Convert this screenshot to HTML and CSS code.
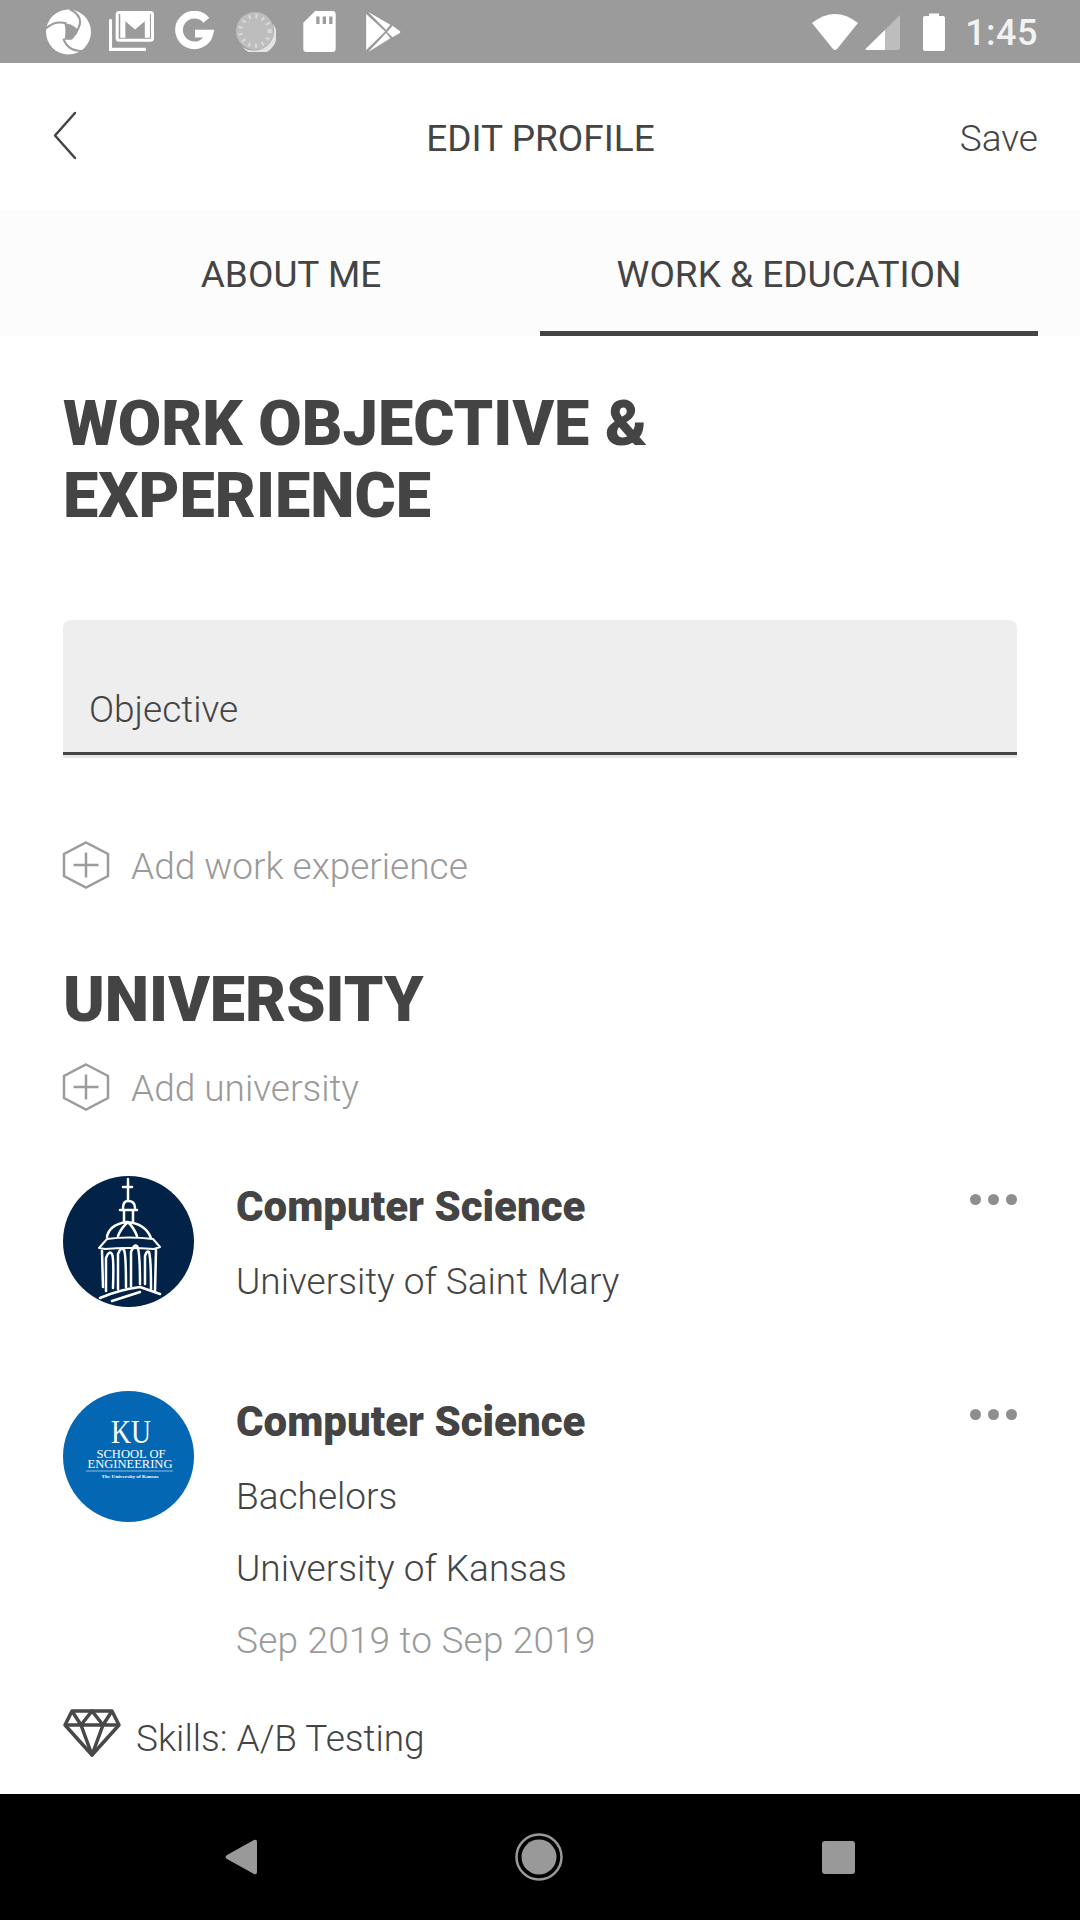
FILE: index.html
```html
<!DOCTYPE html>
<html lang="en">
<head>
<meta charset="utf-8">
<title>Edit profile</title>
<link rel="stylesheet" href="styles.css">
</head>
<body>
<div class="phone">
  <div class="status">
    <div class="status-left">
      <svg class="ic" width="45" height="46" viewBox="0 0 44 45"><circle cx="22" cy="22.500" r="22" fill="#fff"/><g fill="none" stroke="#9b9b9b" stroke-width="2"><path d="M23 0Q37 7 32 18Q30 24 25 29"/><path d="M0 19Q8 11 20 14"/><path d="M17 29Q21 41 35 41"/></g><path d="M18 14Q25 14 31 20Q29 26 25 30L18 30Q20 22 18 14Z" fill="#9b9b9b"/></svg>
      <svg class="ic" width="45" height="41" viewBox="0 0 44 40"><path d="M1.500 8V37.500H36" fill="none" stroke="#fff" stroke-width="3"/><rect x="8" y="1.500" width="34.500" height="27" rx="2" fill="none" stroke="#fff" stroke-width="3"/><path d="M11 3H40V26H35V10L25.500 18L16 10V26H11Z" fill="#fff"/></svg>
      <svg class="ic" width="40" height="41" viewBox="0 0 38 40"><path d="M31 9A15 15 0 1 0 34 22H20" fill="none" stroke="#fff" stroke-width="7.500"/></svg>
      <svg class="ic" width="40" height="40" viewBox="0 0 38 38"><circle cx="18" cy="18" r="18" fill="#bdbdbd"/><path d="M35 11A18 18 0 0 1 6 33A19 19 0 0 0 35 11Z" fill="#e4e4e4"/><circle cx="18" cy="18" r="14" fill="none" stroke="#d8d8d8" stroke-width="4" stroke-dasharray="2 4.600"/></svg>
      <svg class="ic" width="33" height="41" viewBox="0 0 30 38"><path d="M11 0H27A3 3 0 0 1 30 3V35A3 3 0 0 1 27 38H3A3 3 0 0 1 0 35V11Z" fill="#fff"/><path d="M12 5H15V12H12ZM18 5H21V12H18ZM24 5H27V12H24Z" fill="#9b9b9b"/></svg>
      <svg class="ic" width="36" height="40" viewBox="0 0 34 38"><path d="M1 2L19 18.500L1 36Z" fill="#fff"/><path d="M3 0L24 12L20 17Z" fill="#fff"/><path d="M3 38L24 25L20 20Z" fill="#fff"/><path d="M26 13L33 18Q34 19 33 20L26 24L21 19Z" fill="#fff"/></svg>
    </div>
    <div class="status-right">
      <svg class="ic" width="46" height="38" viewBox="0 0 46 38"><path d="M0 10Q23 -8 46 10L25 36Q23 38 21 36Z" fill="#fff"/></svg>
      <svg class="ic sig" width="36" height="36" viewBox="0 0 36 36"><path d="M35 0V33Q35 35 33 35H1Q0 35 1 33.500Z" fill="#bdbdbd"/><path d="M20 15V35H1Q0 35 1 33.500Z" fill="#fff"/></svg>
      <svg class="ic bat" width="22" height="38" viewBox="0 0 22 38"><path d="M6 3V0.500H16V3H20Q22 3 22 5V36Q22 38 20 38H2Q0 38 0 36V5Q0 3 2 3Z" fill="#fff"/></svg>
      <span class="clock">1:45</span>
    </div>
  </div>

  <header class="topbar">
    <svg class="back" width="24" height="50" viewBox="0 0 24 50"><path d="M22 2L2 24.500L22 47" fill="none" stroke="#444" stroke-width="2.500" stroke-linecap="round" stroke-linejoin="round"/></svg>
    <div class="title">EDIT PROFILE</div>
    <div class="save">Save</div>
  </header>

  <nav class="tabs">
    <div class="tab">ABOUT ME</div>
    <div class="tab tab-on">WORK &amp; EDUCATION</div>
  </nav>

  <main class="content">
    <h1 class="heading heading-first">WORK OBJECTIVE &amp;<br>EXPERIENCE</h1>

    <div class="field"><span>Objective</span></div>

    <div class="add add-work">
      <svg width="48" height="48" viewBox="0 0 48 48"><path d="M24 1.500L46 13V35L24 46.500L2 35V13Z" fill="none" stroke="#9c9c9c" stroke-width="2.500"/><path d="M11.500 24H36.500M24 11.500V36.500" fill="none" stroke="#9c9c9c" stroke-width="2.500"/></svg>
      <span>Add work experience</span>
    </div>

    <h1 class="heading heading-uni">UNIVERSITY</h1>

    <div class="add add-uni">
      <svg width="48" height="48" viewBox="0 0 48 48"><path d="M24 1.500L46 13V35L24 46.500L2 35V13Z" fill="none" stroke="#9c9c9c" stroke-width="2.500"/><path d="M11.500 24H36.500M24 11.500V36.500" fill="none" stroke="#9c9c9c" stroke-width="2.500"/></svg>
      <span>Add university</span>
    </div>

    <section class="edu edu-first">
      <svg class="logo" width="131" height="131" viewBox="0 0 131 131">
        <circle cx="65.500" cy="65.500" r="65.500" fill="#022247"/>
        <g fill="none" stroke="#fff" stroke-linecap="round" stroke-linejoin="round">
          <path d="M65 3V24M60 11H69" stroke-width="2.500"/>
          <path d="M60 32Q60 25 65 25Q72 25 72 32M57 34H74M61 35V46M70 35V46" stroke-width="2.500"/>
          <path d="M44 61Q46 49 63 46Q82 47 88 62M55 60Q58 52 65 46Q71 52 74 60" stroke-width="2.500"/>
          <path d="M36 72L44 63Q65 60 90 63L97 71L91 73Q65 71 42 73Z" stroke-width="2"/>
          <path d="M39 75L40 111M93 74L92 116" stroke-width="2.500"/>
          <path d="M43 115V82Q46 74 49 78Q51 82 50 112M55 113V78Q58 70 61 74Q63 78 63 111M68 110V76Q71 68 74 70Q77 74 77 108M82 108V80Q84 74 86 76Q88 82 88 113" stroke-width="2.500"/>
          <path d="M37 122Q55 114 77 111L97 118M49 125L77 116" stroke-width="2.500"/>
        </g>
      </svg>
      <div class="edu-body">
        <div class="edu-title">Computer Science</div>
        <div class="edu-line edu-line-first">University of Saint Mary</div>
      </div>
      <div class="dots"><i></i><i></i><i></i></div>
    </section>

    <section class="edu edu-second">
      <svg class="logo" width="131" height="131" viewBox="0 0 131 131">
        <circle cx="65.500" cy="65.500" r="65.500" fill="#0467b3"/>
        <text class="ku" x="68" y="52" text-anchor="middle" textLength="40" lengthAdjust="spacingAndGlyphs">KU</text>
        <text class="ku-school" x="68" y="67" text-anchor="middle" textLength="69" lengthAdjust="spacingAndGlyphs">SCHOOL OF</text>
        <text class="ku-school" x="67" y="77" text-anchor="middle" textLength="85" lengthAdjust="spacingAndGlyphs">ENGINEERING</text>
        <path d="M23 80H110" stroke="#cfe0f0" stroke-width="0.700"/>
        <text class="ku-small" x="67" y="87" text-anchor="middle" textLength="57" lengthAdjust="spacingAndGlyphs">The University of Kansas</text>
      </svg>
      <div class="edu-body">
        <div class="edu-title">Computer Science</div>
        <div class="edu-line edu-line-first">Bachelors</div>
        <div class="edu-line">University of Kansas</div>
        <div class="edu-line edu-date">Sep 2019 to Sep 2019</div>
      </div>
      <div class="dots"><i></i><i></i><i></i></div>
    </section>

    <div class="skills">
      <svg width="58" height="48" viewBox="0 0 58 48"><g fill="none" stroke="#484848" stroke-width="3.500" stroke-linejoin="round"><path d="M9 2H49L56 16L29 46L2 16Z"/><path d="M2 16H56M9 2L18 16L29 2L40 16L49 2M18 16L29 46L40 16"/></g></svg>
      <span>Skills: A/B Testing</span>
    </div>
  </main>

  <footer class="navbar">
    <svg width="34" height="36" viewBox="0 0 34 36"><path d="M2 16L29 1Q32 0 32 3V33Q32 36 29 35L2 20Q-1 18 2 16Z" fill="#999"/></svg>
    <svg width="48" height="48" viewBox="0 0 48 48"><circle cx="24" cy="24" r="22.500" fill="none" stroke="#999" stroke-width="2.500"/><circle cx="24" cy="24" r="17.500" fill="#999"/></svg>
    <div class="nav-square"></div>
  </footer>
</div>
</body>
</html>
```

FILE: styles.css
```css
* { box-sizing: border-box; }
html, body { margin: 0; padding: 0; }
body { background: #fff; font-family: Roboto, "Liberation Sans", sans-serif; color: #444; }
.phone { width: 1080px; height: 1920px; display: flex; flex-direction: column; overflow: hidden; background: #fff; }
.ic { display: block; flex: none; }

.status { height: 63px; flex: none; background: #9b9b9b; display: flex; justify-content: space-between; align-items: center; padding: 0 42px 0 46px; }
.status-left { display: flex; align-items: center; }
.status-left .ic:nth-child(2) { margin-left: 18px; }
.status-left .ic:nth-child(3) { margin-left: 20px; }
.status-left .ic:nth-child(4) { margin-left: 22px; }
.status-left .ic:nth-child(5) { margin-left: 27px; }
.status-left .ic:nth-child(6) { margin-left: 29px; }
.status-right { display: flex; align-items: center; gap: 7px; }
.bat { margin: 0 13px 0 15px; }
.sig { margin-top: 2px; }
.clock { font-size: 36px; font-weight: 500; color: #f2f2f2; line-height: 40px; letter-spacing: 0.5px; margin-top: 3px; }

.topbar { height: 147px; flex: none; display: grid; grid-template-columns: 1fr auto 1fr; align-items: center; padding: 5px 42px 0 53px; }
.back { display: block; margin-bottom: 7px; }
.title { font-size: 37px; line-height: 44px; transform: translateX(-5px); }
.save { font-size: 37px; font-weight: 300; line-height: 44px; justify-self: end; }

.tabs { height: 126px; flex: none; display: grid; grid-template-columns: 1fr 1fr; padding: 0 42px; background: #fcfcfc; }
.tab { font-size: 37px; line-height: 44px; padding-top: 43px; text-align: center; }
.tab-on { border-bottom: 5px solid #444; }

.content { flex: 1; padding: 0 63px; }
.heading { margin: 0; font-size: 63px; font-weight: 900; line-height: 72px; color: #444; }
.heading-first { padding-top: 52px; }
.heading-uni { margin-top: 75px; }

.field { margin-top: 88px; height: 135px; background: #eee; border-radius: 8px 8px 0 0; border-bottom: 3px solid #444; box-shadow: 0 3px 0 #e8e8e8; padding: 68px 26px 0; font-size: 37px; font-weight: 300; line-height: 44px; }

.add { display: flex; align-items: center; gap: 21px; font-size: 37px; font-weight: 300; color: #9a9a9a; height: 48px; }
.add svg { display: block; flex: none; margin-left: -1px; }
.add span { line-height: 40px; padding-top: 4px; }
.add-work { margin-top: 86px; }
.add-uni { margin-top: 27px; }

.edu { display: flex; align-items: flex-start; }
.edu-first { margin-top: 65px; }
.edu-second { margin-top: 84px; }
.logo { display: block; flex: none; }
.edu-body { margin-left: 42px; flex: 1; }
.edu-title { font-size: 42px; font-weight: 900; line-height: 60px; padding-top: 1px; }
.edu-line { font-size: 37px; font-weight: 300; line-height: 44px; margin-top: 28px; }
.edu-line-first { margin-top: 23px; }
.edu-date { color: #9a9a9a; letter-spacing: 0.2px; }
.dots { display: flex; gap: 7px; margin-top: 18px; }
.dots i { display: block; width: 11px; height: 11px; border-radius: 50%; background: #8e8e8e; }

.ku { font-family: "Liberation Serif", serif; font-size: 34px; fill: #fff; }
.ku-school { font-family: "Liberation Serif", serif; font-size: 12.500px; fill: #fff; }
.ku-small { font-family: "Liberation Serif", serif; font-size: 5px; font-weight: 700; fill: #fff; }

.skills { display: flex; align-items: center; gap: 15px; margin-top: 54px; font-size: 37px; font-weight: 300; line-height: 44px; }
.skills svg { display: block; flex: none; margin-top: -13px; }

.navbar { height: 126px; flex: none; background: #000; display: flex; align-items: center; padding-left: 225px; }
.navbar svg { display: block; flex: none; }
.navbar svg:nth-child(2) { margin-left: 256px; }
.nav-square { width: 33px; height: 33px; margin-left: 259px; border-radius: 3px; background: #999; }
```
